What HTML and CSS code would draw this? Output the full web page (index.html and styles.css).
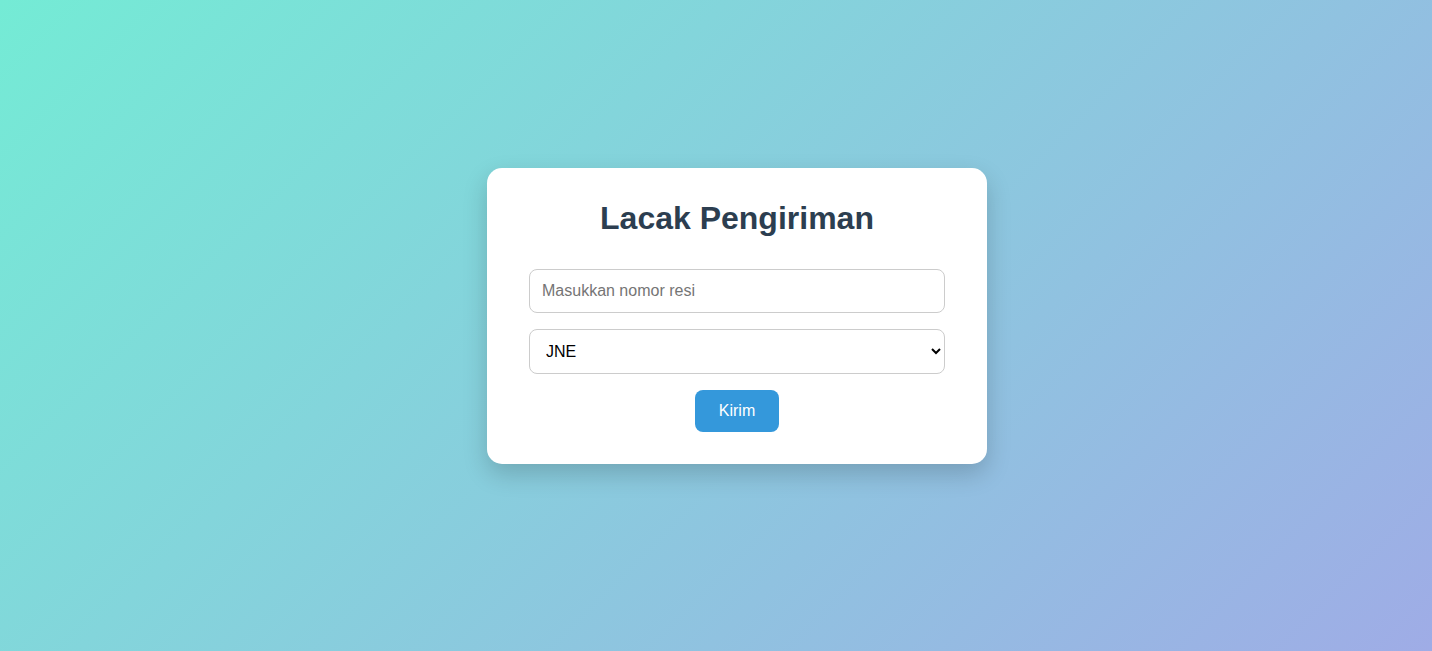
FILE: index.html
```html
<!DOCTYPE html>
<html lang="id">
<head>
<meta charset="utf-8">
<title>Lacak Pengiriman</title>
<link rel="stylesheet" href="styles.css">
</head>
<body>
<main class="page">
  <form class="card">
    <h2 class="title">Lacak Pengiriman</h2>
    <input class="field" type="text" placeholder="Masukkan nomor resi">
    <select class="field select">
      <option>JNE</option>
      <option>J&amp;T</option>
      <option>SiCepat</option>
      <option>POS Indonesia</option>
    </select>
    <button class="btn" type="button">Kirim</button>
  </form>
</main>
</body>
</html>
```

FILE: styles.css
```css
* { box-sizing: border-box; }
html, body { margin: 0; height: 100%; }
body {
  font-family: "Liberation Sans", Arial, sans-serif;
  background: linear-gradient(135deg, #74ebd5, #9face6);
}
.page {
  min-height: 100%;
  display: flex;
  align-items: center;
  justify-content: center;
  padding: 0 0 19px 42px;
}
.card {
  width: 500px;
  background: #fff;
  border-radius: 15px;
  padding: 32px 42px;
  box-shadow: 0 10px 25px rgba(0, 0, 0, 0.18);
  display: flex;
  flex-direction: column;
  align-items: center;
}
.title {
  margin: 0 0 32px;
  font-size: 32px;
  font-weight: bold;
  line-height: 37px;
  color: #2c3e50;
}
.field {
  width: 100%;
  height: 44px;
  padding: 12px;
  font-family: inherit;
  font-size: 16px;
  border: 1px solid #ccc;
  border-radius: 8px;
  margin-bottom: 16px;
  background: #fff;
  color: #000;
}
.field::placeholder { color: #757575; }
.select { height: 45px; padding: 0 8px 0 12px; }
.btn {
  height: 42px;
  padding: 0 24px;
  font-family: inherit;
  font-size: 16px;
  color: #fff;
  background: #3498db;
  border: none;
  border-radius: 8px;
}
```
